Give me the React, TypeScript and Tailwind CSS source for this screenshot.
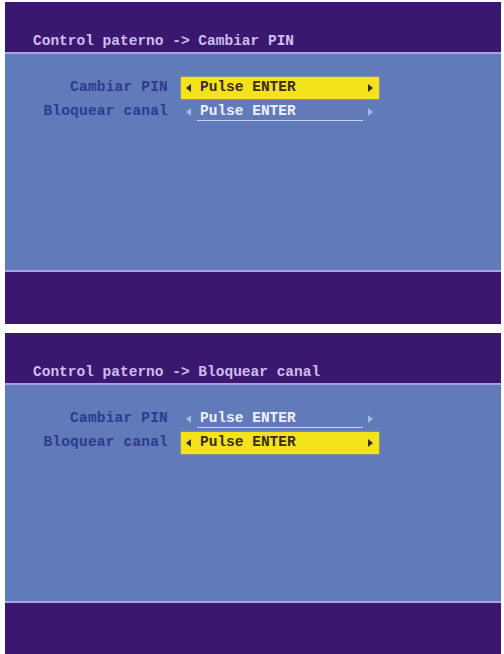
import React from "react";

const mono = { fontFamily: '"Liberation Mono", "DejaVu Sans Mono", monospace' };

function Arrow({ dir, className }: { dir: "l" | "r"; className: string }) {
  return (
    <svg width="6" height="8" viewBox="0 0 6 8" className={className}>
      {dir === "l" ? <path d="M5 0 L0 4 L5 8 Z" fill="currentColor" /> : <path d="M1 0 L6 4 L1 8 Z" fill="currentColor" />}
    </svg>
  );
}

function Row({ label, active }: { label: string; active: boolean }) {
  return (
    <div className="flex items-center h-[22px]">
      <div className="w-[163px] text-right text-[14.5px] font-bold text-[#2c3b8f] tracking-[0.2px]">{label}</div>
      <div
        className={
          active
            ? "relative ml-[13px] w-[198px] h-[22px] flex items-center bg-[#f4e21a] shadow-[0_0_2px_#c8b860]"
            : "relative ml-[13px] w-[198px] h-[22px] flex items-center"
        }
      >
        <Arrow dir="l" className={active ? "ml-[5px] text-[#3a2c10]" : "ml-[5px] text-[#a9b6e6]"} />
        <span
          className={
            active
              ? "ml-[8px] text-[14.5px] font-bold text-[#3a2c10]"
              : "ml-[8px] text-[14.5px] font-bold text-[#eef0ff]"
          }
        >
          Pulse ENTER
        </span>
        <Arrow dir="r" className={active ? "ml-auto mr-[6px] text-[#3a2c10]" : "ml-auto mr-[6px] text-[#a9b6e6]"} />
        {!active && <div className="absolute left-[16px] w-[166px] bottom-[2px] h-[1px] bg-[#c9d2f4]" />}
      </div>
    </div>
  );
}

function Screen({ title, sel }: { title: string; sel: number }) {
  return (
    <div className="w-[496px] ml-[5px]" style={mono}>
      <div className="h-[50px] bg-[#3b186f] pl-[28px] pt-[30px] text-[14.5px] font-bold leading-[18px] text-[#cdbdf2]">
        {title}
      </div>
      <div className="h-[2px] bg-[#a7a4df]" />
      <div className="h-[216px] bg-[#617ab9] pt-[23px] flex flex-col gap-[2px]">
        <Row label="Cambiar PIN" active={sel === 0} />
        <Row label="Bloquear canal" active={sel === 1} />
      </div>
      <div className="h-[2px] bg-[#a7a4df]" />
      <div className="h-[52px] bg-[#3b176f]" />
    </div>
  );
}

export default function App() {
  return (
    <div className="h-[654px] overflow-hidden bg-white pt-[2px]">
      <Screen title="Control paterno -> Cambiar PIN" sel={0} />
      <div className="h-[9px]" />
      <Screen title="Control paterno -> Bloquear canal" sel={1} />
    </div>
  );
}
